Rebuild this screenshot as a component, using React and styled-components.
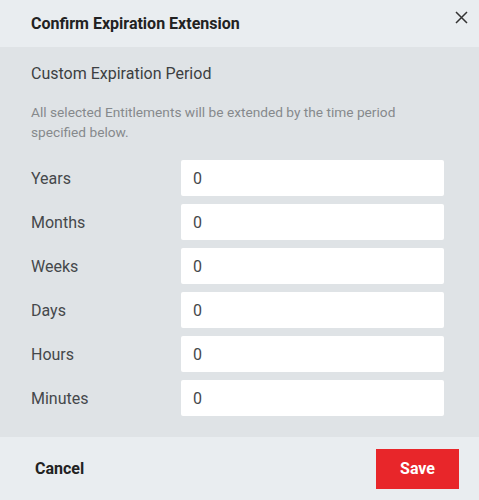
import React from "react";
import styled, { createGlobalStyle } from "styled-components";

const Global = createGlobalStyle`
  html, body { margin: 0; padding: 0; background: #ffffff; }
  body { font-family: Roboto, "Liberation Sans", sans-serif; }
  * { box-sizing: border-box; }
`;

const Dialog = styled.div`
  width: 479px;
  height: 500px;
  display: flex;
  flex-direction: column;
  background: #e9edf0;
`;

const Header = styled.div`
  height: 47px;
  display: flex;
  align-items: center;
  padding: 0 11px 0 31px;
  background: #e9edf0;
  position: relative;
`;

const Title = styled.h2`
  margin: 0;
  font-size: 16px;
  font-weight: 700;
  color: #222222;
`;

const CloseButton = styled.button`
  position: absolute;
  top: 8px;
  right: 9px;
  width: 18px;
  height: 18px;
  padding: 0;
  border: none;
  background: none;
  display: flex;
  align-items: center;
  justify-content: center;
  cursor: pointer;
`;

const Body = styled.div`
  height: 390px;
  background: #dfe3e6;
  padding: 16px 35px 0 31px;
  display: flex;
  flex-direction: column;
`;

const Subtitle = styled.div`
  font-size: 16px;
  color: #3c3f42;
  line-height: 22px;
`;

const Description = styled.p`
  margin: 17px 0 18px;
  font-size: 13.7px;
  line-height: 20px;
  color: #86898c;
`;

const Fields = styled.div`
  display: flex;
  flex-direction: column;
  gap: 8px;
`;

const Row = styled.div`
  display: grid;
  grid-template-columns: 150px 263px;
  align-items: center;
  height: 36px;
`;

const Label = styled.label`
  font-size: 16px;
  color: #45484b;
`;

const Input = styled.input`
  height: 36px;
  width: 263px;
  border: none;
  border-radius: 2px;
  background: #ffffff;
  padding: 0 12px;
  font-family: Roboto, "Liberation Sans", sans-serif;
  font-size: 16px;
  color: #45484b;
  outline: none;
`;

const Footer = styled.div`
  flex: 1;
  display: flex;
  align-items: center;
  justify-content: space-between;
  padding: 0 20px 0 35px;
  background: #e9edf0;
`;

const CancelButton = styled.button`
  border: none;
  background: none;
  padding: 0;
  font-family: Roboto, "Liberation Sans", sans-serif;
  font-size: 16px;
  font-weight: 700;
  color: #222222;
  cursor: pointer;
`;

const SaveButton = styled.button`
  width: 83px;
  height: 40px;
  border: none;
  background: #e8262a;
  color: #ffffff;
  font-family: Roboto, "Liberation Sans", sans-serif;
  font-size: 16px;
  font-weight: 700;
  cursor: pointer;
`;

const fields = ["Years", "Months", "Weeks", "Days", "Hours", "Minutes"];

export default function App() {
  return (
    <>
      <Global />
      <Dialog>
        <Header>
          <Title>Confirm Expiration Extension</Title>
          <CloseButton aria-label="Close">
            <svg width="13" height="13" viewBox="0 0 13 13">
              <path d="M1 1 L12 12 M12 1 L1 12" stroke="#333" strokeWidth="1.5" fill="none" />
            </svg>
          </CloseButton>
        </Header>
        <Body>
          <Subtitle>Custom Expiration Period</Subtitle>
          <Description>
            All selected Entitlements will be extended by the time period specified below.
          </Description>
          <Fields>
            {fields.map((f) => (
              <Row key={f}>
                <Label>{f}</Label>
                <Input defaultValue="0" />
              </Row>
            ))}
          </Fields>
        </Body>
        <Footer>
          <CancelButton>Cancel</CancelButton>
          <SaveButton>Save</SaveButton>
        </Footer>
      </Dialog>
    </>
  );
}
